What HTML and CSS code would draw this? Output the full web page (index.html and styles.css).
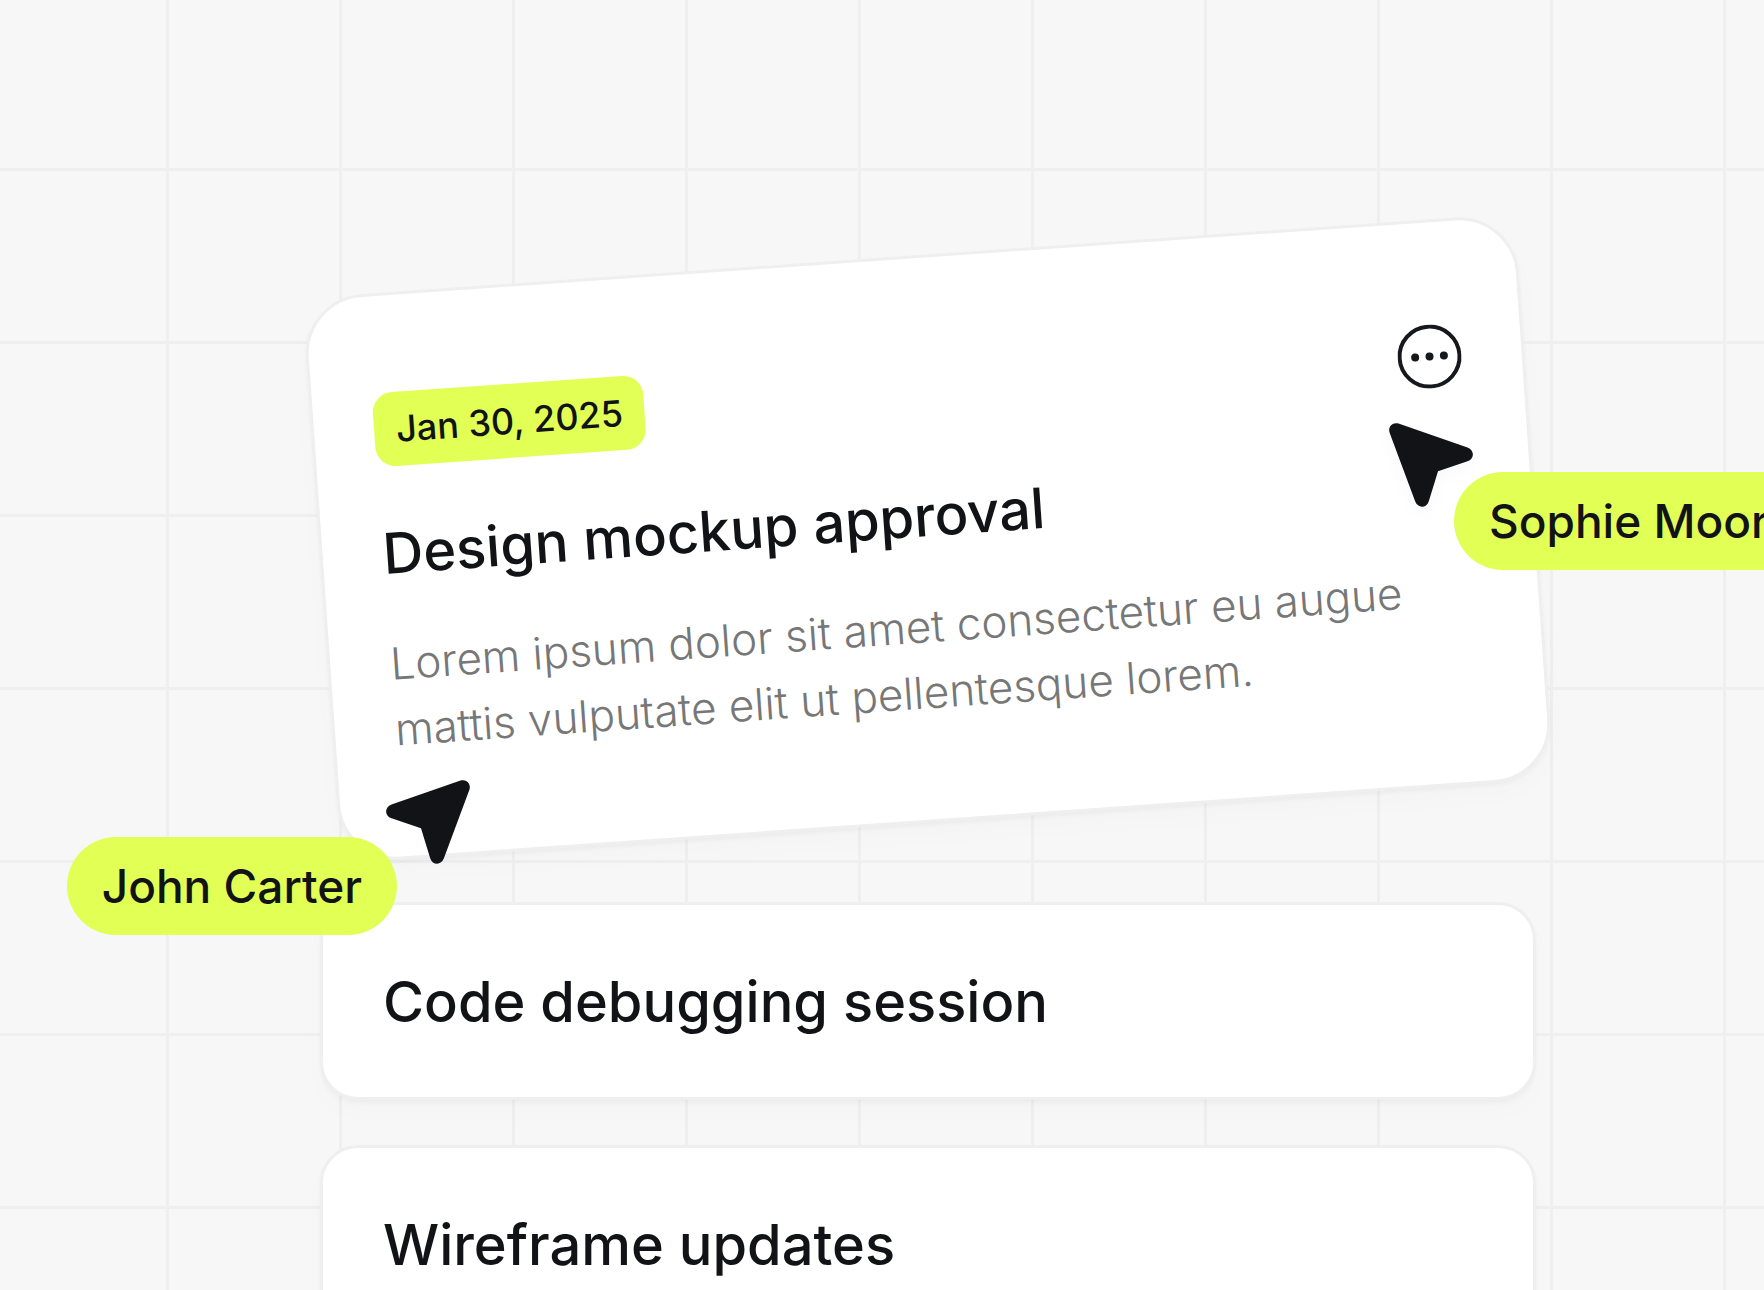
FILE: index.html
```
<!DOCTYPE html>
<html lang="en">
<head>
	<meta charset="UTF-8">
	<meta name="viewport" content="width=device-width, initial-scale=1">
	<title>Tasks</title>
	<link rel="stylesheet" href="styles.css">
</head>
<body>
	<main class="board">
		<div class="featured">
			<article class="card card-tilted">
				<header class="card-head">
					<time class="date" datetime="2025-01-30">Jan 30, 2025</time>
					<button type="button" class="more" aria-label="More options">
						<svg viewBox="0 0 64 64" fill="#17181d">
							<circle cx="32" cy="32" r="30" fill="none" stroke="#17181d" stroke-width="4"/>
							<circle cx="17.6" cy="32" r="4"/>
							<circle cx="32" cy="32" r="4"/>
							<circle cx="46.4" cy="32" r="4"/>
						</svg>
					</button>
				</header>
				<h2 class="title">Design mockup approval</h2>
				<p class="text">Lorem ipsum dolor sit amet consectetur eu augue mattis vulputate elit ut pellentesque lorem.</p>
			</article>

			<div class="user user-sophie">
				<svg class="cursor" viewBox="0 0 84 84">
					<path d="M9.5 .6 78.5 24.4C85.7 27 85.7 35.9 78.5 38.3L49 48.3 39.8 78.2C37.5 85.5 28.8 85.5 26.2 78.6L.7 10C-1.5 4 3.5-1.5 9.5.6Z"/>
				</svg>
				<span class="name">Sophie Moore</span>
			</div>
			<div class="user user-john">
				<svg class="cursor" viewBox="0 0 84 84">
					<path d="M9.5 .6 78.5 24.4C85.7 27 85.7 35.9 78.5 38.3L49 48.3 39.8 78.2C37.5 85.5 28.8 85.5 26.2 78.6L.7 10C-1.5 4 3.5-1.5 9.5.6Z"/>
				</svg>
				<span class="name">John Carter</span>
			</div>
		</div>

		<article class="card card-small">
			<h2 class="title">Code debugging session</h2>
		</article>
		<article class="card card-small">
			<h2 class="title">Wireframe updates</h2>
		</article>
	</main>
</body>
</html>
```
FILE: styles.css
```
*{
	box-sizing:border-box;
}
body,h2,p{
	margin:0;
}
body{
	font-family:Inter, "Liberation Sans", sans-serif;
	color:#121316;
}

/* grid paper background */
.board{
	height:100vh;
	overflow:hidden;
	padding:255px 228px 0 320px;
	background-color:#f7f7f7;
	background-image:
		linear-gradient(90deg, #efefef 3px, transparent 3px),
		linear-gradient(#efefef 3px, transparent 3px);
	background-size:173px 173px;
	background-position:166px 168px;
}

/* cards */
.card{
	background:#fff;
	border:3px solid #efefef;
	box-shadow:0 3px 4px rgba(0,0,0,.03), 0 12px 28px rgba(0,0,0,.015);
}
.card-small{
	border-radius:38px;
	padding:64px 60px 62px;
	margin-bottom:45px;
}
.card-tilted{
	border-radius:60px;
	padding:97px 60px 94px;
	transform:rotate(-4deg);
}
.card-head{
	display:flex;
	align-items:center;
	justify-content:space-between;
	margin-bottom:54px;
}
.date{
	padding:0 22px;
	border-radius:20px;
	background:#e1ff55;
	font-size:36px;
	font-weight:500;
	line-height:74px;
}
.more{
	width:64px;
	height:64px;
	padding:0;
	border:0;
	background:none;
	cursor:pointer;
}
.more svg{
	display:block;
}
.title{
	font-size:56px;
	font-weight:500;
	line-height:66px;
}
.text{
	max-width:1060px;
	margin-top:44px;
	font-size:44px;
	font-weight:300;
	line-height:66px;
	color:#777;
}

/* live cursors */
.featured{
	position:relative;
	margin-bottom:80px;
}
.user{
	position:absolute;
}
.cursor{
	display:block;
	width:84px;
	height:84px;
	fill:#121316;
}
.name{
	display:block;
	border-radius:50px;
	padding:0 35px;
	background:#e1ff55;
	font-size:46px;
	font-weight:500;
	line-height:98px;
	white-space:nowrap;
}
.user-sophie{
	top:168px;
	left:calc(100% - 147px);
}
.user-sophie .cursor{
	filter:drop-shadow(0 8px 8px rgba(0,0,0,.02));
}
.user-sophie .name{
	margin:-35px 0 0 65px;
}
.user-john{
	top:525px;
	right:calc(100% - 150px);
}
.user-john .cursor{
	margin-left:auto;
	transform:scaleX(-1);
}
.user-john .name{
	margin:-27px 73px 0 0;
}
```
